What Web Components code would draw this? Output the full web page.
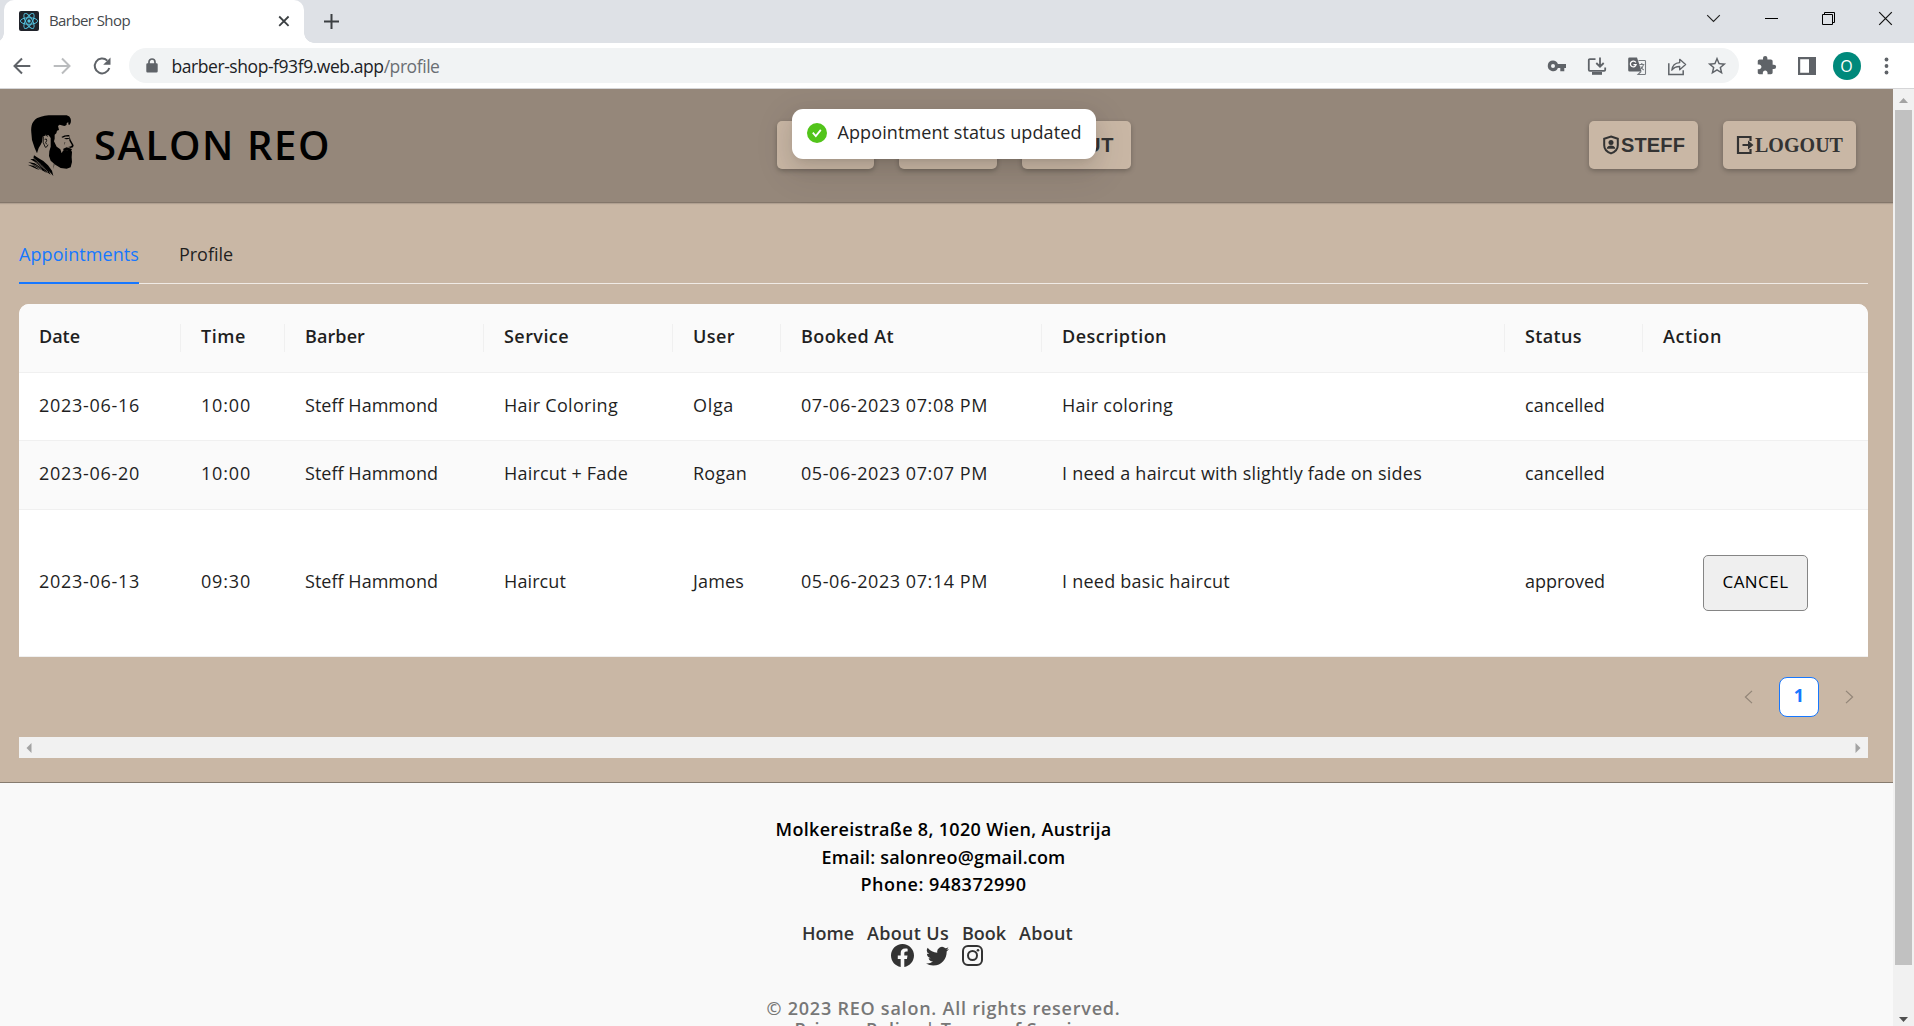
<!DOCTYPE html>
<html lang="en">
<head>
<meta charset="utf-8">
<title>Barber Shop</title>
<style>
html,body{margin:0;height:100%;overflow:hidden}
body{font-family:"Open Sans","Noto Sans",sans-serif;font-size:18px;color:#1f1f1f}
</style>
</head>
<body>
<barber-window></barber-window>
<script>
const define = (name, css, html) => {
  const t = document.createElement('template');
  t.innerHTML = `<style>*{box-sizing:border-box}${css}</style>${html}`;
  customElements.define(name, class extends HTMLElement {
    constructor() {
      super();
      this.attachShadow({mode: 'open'}).append(t.content.cloneNode(true));
    }
  });
};

define('barber-window', `
:host{display:flex;flex-direction:column;width:1914px;height:1026px;overflow:hidden;position:relative}
.view{display:flex;flex:1;min-height:0}
.page{flex:1;display:flex;flex-direction:column;overflow:hidden}
`, `
<tab-strip></tab-strip>
<tool-bar></tool-bar>
<div class="view">
  <div class="page"><site-header></site-header><profile-page></profile-page><site-footer></site-footer></div>
  <page-scrollbar></page-scrollbar>
</div>
<toast-message><fit-text w="244">Appointment status updated</fit-text></toast-message>
`);

define('tab-strip', `
:host{display:flex;height:43px;background:#dee1e6;align-items:stretch}
.tab{position:relative;margin-left:4px;width:300px;background:#fff;border-radius:10px 10px 0 0;display:flex;align-items:center;padding:0 14px 1px 15px;font-size:15px;color:#45494d}
.tab::before,.tab::after{content:"";position:absolute;bottom:0;width:10px;height:10px}
.tab::before{left:-10px;background:radial-gradient(circle at 0 0,#dee1e6 9.5px,#fff 10px)}
.tab::after{right:-10px;background:radial-gradient(circle at 100% 0,#dee1e6 9.5px,#fff 10px)}
.name{margin-left:10px;flex:1;line-height:20px;padding-bottom:2px}
svg{display:block}
.plus{margin:14px 0 0 20px}
.win{margin-left:auto;display:flex}
.win span{width:57.2px;display:flex;justify-content:center;padding-top:11px}
`, `
<div class="tab">
<svg width="20" height="20" viewBox="0 0 20 20"><rect width="20" height="20" rx="2" fill="#20232a"/><g fill="none" stroke="#53c1de" stroke-width=".95"><ellipse cx="10" cy="10" rx="8.6" ry="3.3"/><ellipse cx="10" cy="10" rx="8.6" ry="3.3" transform="rotate(60 10 10)"/><ellipse cx="10" cy="10" rx="8.6" ry="3.3" transform="rotate(120 10 10)"/></g><circle cx="10" cy="10" r="1.7" fill="#53c1de"/></svg>
<span class="name"><fit-text w="81">Barber Shop</fit-text></span>
<svg width="12" height="12" viewBox="0 0 12 12" style="margin-right:0"><path d="M1.2 1.5l9.4 9.4M10.6 1.5L1.2 10.9" stroke="#3c4043" stroke-width="1.8"/></svg>
</div>
<svg class="plus" width="15" height="15" viewBox="0 0 15 15"><path d="M7.5 0v15M0 7.5h15" stroke="#3c4043" stroke-width="2"/></svg>
<div class="win">
<span><svg width="15" height="15" viewBox="0 0 15 15"><path d="M1.2 4.2l6.3 6.3 6.3-6.3" fill="none" stroke="#222" stroke-width="1.1"/></svg></span>
<span><svg width="15" height="15" viewBox="0 0 15 15"><path d="M1 7.5h13" stroke="#000" stroke-width="1"/></svg></span>
<span><svg width="15" height="15" viewBox="0 0 15 15"><path d="M1.5 3.5h10v10h-10zM3.5 3.5v-2h10v10h-2" fill="none" stroke="#000" stroke-width="1"/></svg></span>
<span><svg width="15" height="15" viewBox="0 0 15 15"><path d="M1.2 1.2l12.6 12.6M13.8 1.2L1.2 13.8" stroke="#111" stroke-width="1.2"/></svg></span>
</div>
`);

define('tool-bar', `
:host{display:flex;height:46px;background:#fff;border-bottom:1px solid #d5d5d7;align-items:flex-start;padding:5px 7.5px 0 1.5px;color:#5f6368}
.c{width:40px;height:35px;display:flex;align-items:center;justify-content:center;flex:none}
svg{display:block;fill:currentColor}
.omni{flex:1;margin:0 7.5px;height:35px;border-radius:18px;background:#f1f3f4;display:flex;align-items:center;padding:0 2.500px 0 9.5px}
.lock{width:26px;display:flex;justify-content:center;margin-right:7px}
.url{flex:1;font-size:17.5px;line-height:26px;color:#202124}
.url i{font-style:normal;color:#6a6e73}
.av{width:28px;height:28px;border-radius:50%;background:#00897b;color:#fff;font-size:16px;display:flex;align-items:center;justify-content:center;line-height:28px}
`, `
<span class="c"><svg width="18" height="18" viewBox="0 0 18 18"><path d="M9 1.500L1.500 9 9 16.500M2 9h15.300" fill="none" stroke="#5f6368" stroke-width="2"/></svg></span>
<span class="c"><svg width="18" height="18" viewBox="0 0 18 18"><path d="M9 1.500L16.500 9 9 16.500M16 9H.7" fill="none" stroke="#babcbe" stroke-width="2"/></svg></span>
<span class="c"><svg width="20" height="20" viewBox="0 0 20 20"><path d="M15.300 4.600A7.400 7.400 0 1 0 17.300 12" fill="none" stroke="#5f6368" stroke-width="2"/><path d="M18.500 1.500v7.300h-7.300z"/></svg></span>
<div class="omni">
<span class="lock"><svg width="12" height="15" viewBox="0 0 12 15"><path d="M1.500 5.300h9A1.300 1.300 0 0 1 11.700 6.600v6.600a1.300 1.300 0 0 1-1.300 1.300h-9A1.300 1.300 0 0 1 .3 13.200V6.600A1.300 1.300 0 0 1 1.500 5.300z"/><path d="M3 6V4a3 3 0 0 1 6 0v2" fill="none" stroke="#5f6368" stroke-width="1.700"/></svg></span>
<span class="url"><fit-text w="268">barber-shop-f93f9.web.app<i>/profile</i></fit-text></span>
<span class="c"><svg width="20" height="20" viewBox="0 0 20 20"><path fill-rule="evenodd" d="M6 4.500a5.300 5.300 0 0 1 4.900 3.500H19v4h-1.700v3.200h-4V12H10.900A5.300 5.300 0 1 1 6 4.500zM6 8a2 2 0 1 0 0 4 2 2 0 0 0 0-4z"/></svg></span>
<span class="c"><svg width="20" height="20" viewBox="0 0 20 20"><path d="M8.500 3.200H2.800a1 1 0 0 0-1 1v9.600a1 1 0 0 0 1 1h14.400a1 1 0 0 0 1-1V11.500M13 1.500v9M9.300 7l3.700 3.700L16.700 7" fill="none" stroke="#5f6368" stroke-width="1.800"/><path d="M5 16h10v2.800H5z"/></svg></span>
<span class="c"><svg width="20" height="20" viewBox="0 0 20 20"><path d="M2.500 1.500h7.500l4.600 14H2.500A1.300 1.300 0 0 1 1.200 14.200V2.800A1.300 1.300 0 0 1 2.500 1.500z"/><path d="M11.500 4.500h6.200a.8.8 0 0 1 .8.8v12.400a.8.8 0 0 1-.8.800H11l3-3" fill="none" stroke="#777b80" stroke-width="1.100"/><path d="M8.800 6.500A2.900 2.900 0 1 0 9.100 8.700H6.500" fill="none" stroke="#fff" stroke-width="1.300"/><path d="M12.300 8.500h5M14.800 7v1.500M16.600 8.500c-.5 2.300-2 4-3.700 5M13.800 10.300c.5 1.600 1.800 3 3 3.600" fill="none" stroke="#777b80" stroke-width="1.100"/></svg></span>
<span class="c"><svg width="20" height="20" viewBox="0 0 20 20"><path d="M1.800 7.200v11.300h14.400v-4.200" fill="none" stroke="#5f6368" stroke-width="1.500"/><path d="M4.800 14.200C5.300 9.500 8.200 6.900 12.700 6.600V3.300L18.600 8.600 12.700 13.800V10.500C9 10.500 6.600 11.600 4.800 14.200z" fill="none" stroke="#5f6368" stroke-width="1.300" stroke-linejoin="round"/></svg></span>
<span class="c"><svg width="22" height="22" viewBox="0 0 24 24"><path d="M22 9.240l-7.190-.62L12 2 9.190 8.630 2 9.240l5.460 4.730L5.820 21 12 17.270 18.180 21l-1.630-7.030L22 9.240zM12 15.400l-3.760 2.270 1-4.280-3.320-2.880 4.380-.38L12 6.100l1.710 4.040 4.380.38-3.320 2.880 1 4.280L12 15.400z"/></svg></span>
</div>
<span class="c"><svg width="21" height="21" viewBox="0 0 24 24"><path d="M20.500 11H19V7c0-1.100-.9-2-2-2h-4V3.500a2.500 2.500 0 0 0-5 0V5H4c-1.100 0-1.990.9-1.990 2v3.800H3.500c1.490 0 2.700 1.210 2.700 2.700s-1.210 2.700-2.700 2.700H2V20c0 1.100.9 2 2 2h3.800v-1.500c0-1.490 1.210-2.700 2.700-2.700 1.490 0 2.700 1.210 2.700 2.700V22H17c1.100 0 2-.9 2-2v-4h1.500a2.500 2.500 0 0 0 0-5z"/></svg></span>
<span class="c"><svg width="18" height="18" viewBox="0 0 18 18"><path fill-rule="evenodd" d="M0 0h18v18H0zM2.200 2.200v13.600h8.800V2.200z"/></svg></span>
<span class="c"><span class="av">O</span></span>
<span class="c"><svg width="5" height="18" viewBox="0 0 5 18"><circle cx="2.500" cy="2.500" r="1.900"/><circle cx="2.500" cy="9" r="1.900"/><circle cx="2.500" cy="15.500" r="1.900"/></svg></span>
`);

define('page-scrollbar', `
:host{display:flex;flex-direction:column;width:21px;background:#f1f1f1;align-items:center;flex:none}
.t{width:17px;height:855px;background:#c1c1c1}
svg{display:block}
`, `
<svg width="21" height="21" viewBox="0 0 21 21"><path d="M6 14l4.500-5 4.500 5z" fill="#a3a3a3"/></svg>
<div class="t"></div>
<svg width="21" height="60" viewBox="0 0 21 60"><path d="M6 52l4.500 5 4.500-5z" fill="#505050"/></svg>
`);

define('nav-button', `
:host{display:flex;align-items:center;height:48px;border-radius:5px;background:#c9b7a5;color:#333;font:bold 20px "Liberation Sans",Arial,sans-serif;box-shadow:0 2px 5px rgba(0,0,0,.25);justify-content:center;flex:none}
`, `<slot></slot>`);

define('site-header', `
:host{display:flex;height:114px;flex:none;background:#95877a;border-bottom:1px solid #83766a;align-items:flex-start;padding:0 37px 0 26px;box-shadow:0 1px 1px rgba(0,0,0,.12);position:relative}
.logo{margin-top:23px;display:block}
h1{margin:29px 0 0 16px;font-size:40px;line-height:54px;font-weight:600;color:#000;width:240px;white-space:nowrap}
nav{display:flex;gap:25px;margin:32px 0 0 443px}
.user{display:flex;gap:25px;margin:32px 0 0 auto}
svg{display:block;flex:none}
`, `
<svg class="logo" width="52" height="68" viewBox="0 0 156 204">
<path d="M16 62C14 40 20 26 34 18C54 8 78 9 100 10L122 10Q132 12 134 20Q137 32 129 40Q126 39 127 31L122 33Q124 40 115 42L101 38L96 42L99 54L93 56L91 64L86 68L86 80L84 88L92 104L103 112L107 124L110 118L116 114L124 115L134 112L138 120L137 136L138 150L134 166L122 170L104 168L88 158L74 146L69 132L70 118L74 104L74 78L68 70L58 68L50 74L48 90L44 98L38 108L33 124L26 108L18 84Z"/>
<path d="M52 72Q58 66 66 73M52 74Q48 92 58 106Q64 106 66 98M56 82Q63 78 62 86L59 92L62 97" fill="none" stroke="#000" stroke-width="2.500"/>
<path d="M106 75Q115 68 130 69L130 73Q118 73 110 77ZM114 79L130 77L128 81L120 82ZM130 72L134 84L143 100L141 106L134 108L126 105L135 103L138 100L130 86ZM112 110L122 106L136 110L138 114L112 116ZM118 91L114 100L116 91Z"/>
<path d="M24 130L38 139L52 147L66 160L78 176L82 192L66 174L46 160L22 139ZM13 141L24 141L48 158L68 176L74 188L54 174L34 156ZM7 150L26 154L50 170L64 184L40 170L22 160ZM5 158L22 161L42 174L32 171ZM84 151L85 158L82 172Z"/>
<path d="M16 146L36 154L56 172M10 155L30 161L48 173M22 138L45 158L66 180" fill="none" stroke="#95877a" stroke-width="1.500"/>
</svg>
<h1><fit-text w="237">SALON REO</fit-text></h1>
<nav>
<nav-button role="link" aria-label="Home" style="width:97px"></nav-button>
<nav-button role="link" aria-label="Book" style="width:98px"></nav-button>
<nav-button style="width:109px"><fit-text w="76">ABOUT</fit-text></nav-button>
</nav>
<div class="user">
<nav-button style="width:109px"><svg width="18" height="20" viewBox="0 0 18 20"><path d="M9 1.500l6.800 2.200v6.500c0 4-2.800 6.700-6.800 8.200-4-1.500-6.800-4.200-6.800-8.200V3.700z" fill="none" stroke="#333" stroke-width="2"/><circle cx="9" cy="7.400" r="2.500" fill="#333"/><path d="M4.700 13.700c.3-2.600 2.200-3.300 4.300-3.300s4 .7 4.300 3.300z" fill="#333"/></svg><fit-text w="64" style="margin-left:1px">STEFF</fit-text></nav-button>
<nav-button style="width:133px;font-family:'Liberation Serif','Times New Roman',serif"><svg width="18" height="20" viewBox="0 0 18 20"><path d="M14.500 6V2H2v16h12.500v-4" fill="none" stroke="#333" stroke-width="2.200"/><path d="M6.500 8.900H12V5.500l5.500 4.500-5.500 4.500V11.100H6.500z" fill="#333"/></svg><fit-text w="88" style="margin-left:1px">LOGOUT</fit-text></nav-button>
</div>
`);

define('toast-message', `
:host{position:absolute;left:791.500px;top:109px;width:304px;height:50px;border-radius:11px;background:#fff;box-shadow:0 8px 20px rgba(0,0,0,.09),0 4px 8px -5px rgba(0,0,0,.14),0 11px 34px 10px rgba(0,0,0,.06);display:flex;align-items:center;padding:0 0 2px 15px;color:#262626}
svg{margin-right:11px}
slot{display:block;margin-top:-2px}
`, `
<svg width="20" height="20" viewBox="0 0 20 20"><circle cx="10" cy="10" r="10" fill="#52c41a"/><path d="M5.800 9.700l3 3.400 5-6.200" fill="none" stroke="#fff" stroke-width="1.800"/></svg><slot></slot>
`);

const W = (w, t) => `<fit-text w="${w}">${t}</fit-text>`;
const row = (cls, cells) => `<div class="r ${cls}">${cells.map(c => `<span>${c ? W(c[0], c[1]) : ''}</span>`).join('')}</div>`;

define('appointment-table', `
:host{display:block;background:#fff;border-radius:10px 10px 0 0;overflow:hidden}
.r{display:grid;grid-template-columns:162px 104px 199px 189px 108px 261px 463px 138px 1fr;height:68px;border-bottom:1px solid #f0f0f0;align-items:center}
.r>span{padding:0 0 3px 20px;line-height:28px;white-space:nowrap}
.r.h{height:69px;background:#fafafa;font-weight:600}
.h>span{border-right:1px solid #f0f0f0;height:28px;padding-bottom:0}
.h fit-text{margin-top:-2px;vertical-align:top}
.h>span:last-child{border:0}
.r.alt{height:69px;background:#fafafa}
.r.alt>span,.r.tall>span{padding-bottom:5px}
.r.tall{height:147px}
.r.tall>.act{padding:0;display:flex;justify-content:center}
button{font:17px "Open Sans",sans-serif;width:105px;height:56px;border:1px solid #858585;border-radius:5px;background:#efefef;color:#000;padding:0 0 3px}
`, row('h', [[41,'Date'],[45,'Time'],[60,'Barber'],[65,'Service'],[42,'User'],[93,'Booked At'],[105,'Description'],[57,'Status'],[59,'Action']])
 + row('', [[101,'2023-06-16'],[50,'10:00'],[133,'Steff Hammond'],[114,'Hair Coloring'],[41,'Olga'],[187,'07-06-2023 07:08 PM'],[111,'Hair coloring'],[80,'cancelled'],null])
 + row('alt', [[101,'2023-06-20'],[50,'10:00'],[133,'Steff Hammond'],[124,'Haircut + Fade'],[54,'Rogan'],[187,'05-06-2023 07:07 PM'],[360,'I need a haircut with slightly fade on sides'],[80,'cancelled'],null])
 + row('tall', [[101,'2023-06-13'],[50,'09:30'],[133,'Steff Hammond'],[62,'Haircut'],[51,'James'],[187,'05-06-2023 07:14 PM'],[168,'I need basic haircut'],[80,'approved']])
   .replace(/<\/div>$/, `<span class="act"><button>${W(66,'CANCEL')}</button></span></div>`));

define('profile-page', `
:host{display:flex;flex-direction:column;height:580px;flex:none;background:#c9b7a5;border-bottom:1px solid #867b6f;padding:35px 25px 0 19px;box-sizing:border-box}
.tabs{display:flex;gap:40px;height:46px;border-bottom:1px solid #f0ebe6;line-height:28px}
.tabs span{height:46px;padding-top:2px;white-space:nowrap}
.tabs .on{color:#1677ff;border-bottom:2px solid #1677ff;width:120px}
appointment-table{margin-top:20px}
.pg{display:flex;justify-content:flex-end;align-items:center;height:40px;margin:20px 0;padding-right:14px}
.pg b{width:40px;height:40px;border:1px solid #1677ff;border-radius:8px;background:#fff;color:#1677ff;font-weight:700;text-align:center;line-height:34px;margin:0 26px}
.bar{height:21px;background:#f1f1f1;display:flex;justify-content:space-between;align-items:center;padding:0 7px 0 7px}
svg{display:block}
`, `
<div class="tabs"><span class="on"><fit-text w="120">Appointments</fit-text></span><span><fit-text w="54">Profile</fit-text></span></div>
<appointment-table></appointment-table>
<div class="pg"><svg width="9" height="14" viewBox="0 0 10 16"><path d="M9 1L1.500 8 9 15" fill="none" stroke="#928578" stroke-width="1.400"/></svg><b>1</b><svg width="9" height="14" viewBox="0 0 10 16"><path d="M1 1l7.500 7L1 15" fill="none" stroke="#928578" stroke-width="1.400"/></svg></div>
<div class="bar"><svg width="6" height="10" viewBox="0 0 6 10"><path d="M5.500 0v10L.5 5z" fill="#a3a3a3"/></svg><svg width="6" height="10" viewBox="0 0 6 10"><path d="M.5 0v10l5-5z" fill="#a3a3a3"/></svg></div>
`);

define('site-footer', `
:host{display:flex;flex-direction:column;align-items:center;flex:1;background:#f9f9f9;font-weight:600;color:#000;padding:33px 6px 0 0;min-height:0;overflow:hidden}
p{margin:0;line-height:27.500px;white-space:nowrap;flex:none}
.links{display:flex;gap:13px;color:#333;margin-top:20px;line-height:28px;padding-right:12px}
.soc{display:flex;gap:12px;color:#333;margin:-3px 0 0 -13px}
svg{display:block;fill:#333}
.c{color:#777;margin-top:28px;line-height:27px}
.c+.c{margin-top:-6px}
`, `
<p><fit-text w="336">Molkereistraße 8, 1020 Wien, Austrija</fit-text></p>
<p><fit-text w="244">Email: salonreo@gmail.com</fit-text></p>
<p><fit-text w="166">Phone: 948372990</fit-text></p>
<div class="links"><fit-text w="52">Home</fit-text><fit-text w="82">About Us</fit-text><fit-text w="44">Book</fit-text><fit-text w="54">About</fit-text></div>
<div class="soc">
<svg width="23" height="23" viewBox="0 0 16 16"><path d="M16 8.049c0-4.446-3.582-8.050-8-8.050C3.580 0-.002 3.603-.002 8.050c0 4.017 2.926 7.347 6.750 7.951v-5.625h-2.030V8.050H6.750V6.275c0-2.017 1.195-3.131 3.022-3.131.876 0 1.791.157 1.791.157v1.980h-1.009c-.993 0-1.303.621-1.303 1.258v1.510h2.218l-.354 2.326H9.250V16c3.824-.604 6.750-3.934 6.750-7.951z"/></svg>
<svg width="23" height="23" viewBox="0 0 16 16"><path d="M5.026 15c6.038 0 9.341-5.003 9.341-9.334 0-.14 0-.282-.006-.422A6.685 6.685 0 0 0 16 3.542a6.658 6.658 0 0 1-1.889.518 3.301 3.301 0 0 0 1.447-1.817 6.533 6.533 0 0 1-2.087.793A3.286 3.286 0 0 0 7.875 6.030a9.325 9.325 0 0 1-6.767-3.429 3.289 3.289 0 0 0 1.018 4.382A3.323 3.323 0 0 1 .640 6.575v.045a3.288 3.288 0 0 0 2.632 3.218 3.203 3.203 0 0 1-.865.115 3.230 3.230 0 0 1-.614-.057 3.283 3.283 0 0 0 3.067 2.277A6.588 6.588 0 0 1 .780 13.580a6.320 6.320 0 0 1-.780-.045A9.344 9.344 0 0 0 5.026 15z"/></svg>
<svg width="23" height="23" viewBox="0 0 23 23"><rect x="2" y="2" width="19" height="19" rx="5" fill="none" stroke="#333" stroke-width="2"/><circle cx="11.500" cy="11.500" r="4.500" fill="none" stroke="#333" stroke-width="2"/><circle cx="17" cy="6.200" r="1.300"/></svg>
</div>
<p class="c"><fit-text w="354">© 2023 REO salon. All rights reserved.</fit-text></p>
<p class="c"><fit-text w="298">Privacy Policy | Terms of Service</fit-text></p>
`);

/* Text run tracked out to a set width through letter-spacing. */
customElements.define('fit-text', class extends HTMLElement {
  constructor() {
    super();
    this.attachShadow({mode: 'open'}).innerHTML = '<style>:host{display:inline-block;white-space:nowrap}</style><slot></slot>';
  }
  connectedCallback() {
    const n = this.textContent.length;
    const w = this.getBoundingClientRect().width;
    if (n && w) this.style.letterSpacing = ((+this.getAttribute('w') - w) / n) + 'px';
  }
});
</script>
</body>
</html>
